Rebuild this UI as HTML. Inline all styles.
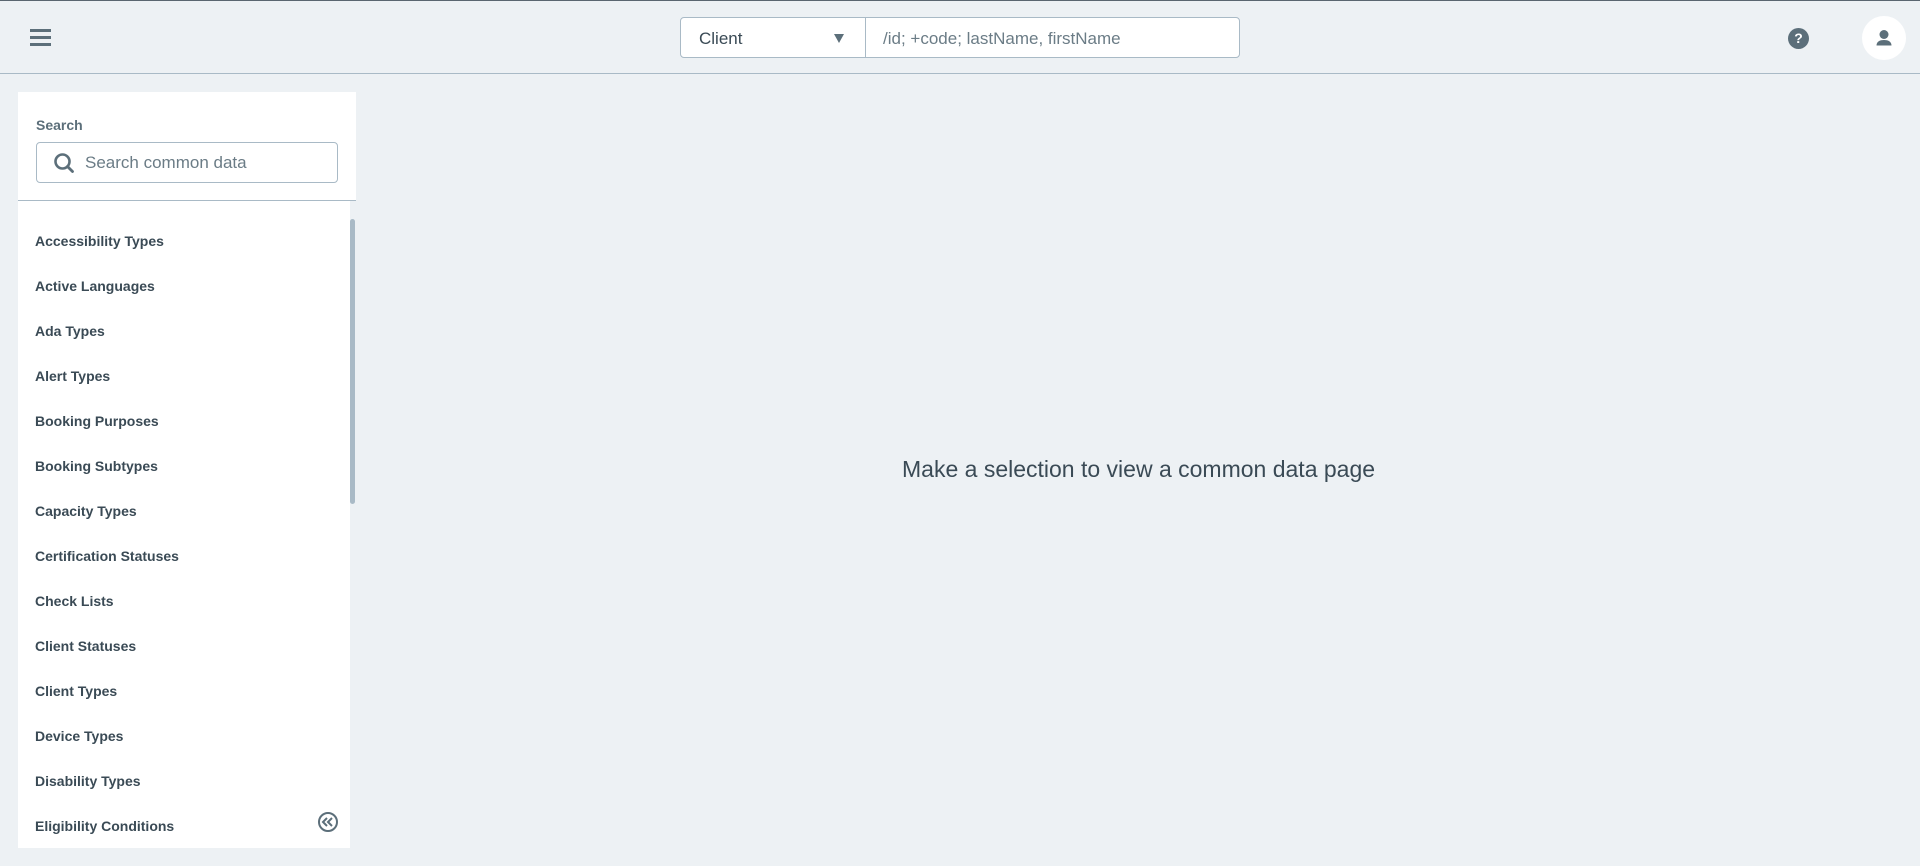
<!DOCTYPE html>
<html><head><meta charset="utf-8"><style>
*{box-sizing:border-box;margin:0;padding:0}
body{width:1920px;height:866px;background:#edf1f4;font-family:"Liberation Sans",sans-serif;position:relative;overflow:hidden;color:#3a4a55}
.top{position:absolute;left:0;top:0;width:1920px;height:74px;border-top:1px solid #5a6670;border-bottom:1px solid #a9bac6;background:#edf1f4}
.hb{position:absolute;left:30px;top:28px;width:21px}
.hb i{display:block;height:2.5px;background:#5c6f7a;margin-bottom:4.5px}
.sbox{position:absolute;left:680px;top:16px;width:560px;height:41px;background:#fff;border:1px solid #a9bac6;border-radius:4px}
.sel{position:absolute;left:0;top:0;width:185px;height:39px;border-right:1px solid #a9bac6;font-size:17px;color:#3a4a55;padding:11px 0 0 18px}
.tri{position:absolute;left:153px;top:16px;width:0;height:0;border-left:5px solid transparent;border-right:5px solid transparent;border-top:9px solid #5c6f7a}
.ph{position:absolute;left:202px;top:11px;font-size:17px;color:#6b7c86}
.help{position:absolute;left:1788px;top:27px;width:21px;height:21px;border-radius:50%;background:#5c6f7a;color:#fff;font-size:14px;font-weight:bold;text-align:center;line-height:21px}
.user{position:absolute;left:1862px;top:15px;width:44px;height:44px;border-radius:50%;background:#fff}
.panel{position:absolute;left:18px;top:92px;width:338px;height:756px;overflow:hidden}
.head{position:absolute;left:0;top:0;width:338px;height:109px;background:#fff}
.list{position:absolute;left:0;top:109px;width:332px;height:647px;background:#fff}
.lbl{position:absolute;left:18px;top:25px;font-size:14px;color:#5c6f7a;font-weight:bold}
.in{position:absolute;left:18px;top:50px;width:302px;height:41px;border:1px solid #a9bac6;border-radius:4px}
.in span{position:absolute;left:48px;top:10px;font-size:17px;color:#6b7c86}
.div{position:absolute;left:0;top:108px;width:338px;height:1px;background:#a9bac6}
.sc{position:absolute;left:332px;top:127px;width:5px;height:285px;background:#a9bac6;border-radius:3px}
.items{position:absolute;left:17px;top:140px}
.items div{height:45px;font-size:14px;font-weight:bold;color:#3a4a55;line-height:18px}
.msg{position:absolute;left:902px;top:456px;font-size:23px;color:#3a4a55}
</style></head><body>
<div class="top">
<div class="hb"><i></i><i></i><i></i></div>
<div class="sbox"><div class="sel">Client<div class="tri"></div></div><div class="ph">/id; +code; lastName, firstName</div></div>
<div class="help">?</div>
<div class="user"><svg width="44" height="44" viewBox="0 0 44 44"><circle cx="22" cy="18.5" r="4.5" fill="#5c6f7a"/><path d="M14.5 29.5c0-4 3.5-5.5 7.5-5.5s7.5 1.5 7.5 5.5z" fill="#5c6f7a"/></svg></div>
</div>
<div class="panel">
<div class="head"></div><div class="list"></div>
<div class="lbl">Search</div>
<div class="in"><svg style="position:absolute;left:16px;top:9px" width="22" height="22" viewBox="0 0 22 22"><circle cx="9.5" cy="9.5" r="7" fill="none" stroke="#5c6f7a" stroke-width="2.6"/><path d="M14.5 14.5L19.5 19.5" stroke="#5c6f7a" stroke-width="2.8" stroke-linecap="round"/></svg><span>Search common data</span></div>
<div class="div"></div>
<div class="sc"></div>
<div class="items">
<div>Accessibility Types</div><div>Active Languages</div><div>Ada Types</div><div>Alert Types</div><div>Booking Purposes</div><div>Booking Subtypes</div><div>Capacity Types</div><div>Certification Statuses</div><div>Check Lists</div><div>Client Statuses</div><div>Client Types</div><div>Device Types</div><div>Disability Types</div><div>Eligibility Conditions</div>
</div>
<svg style="position:absolute;left:299px;top:719px" width="22" height="22" viewBox="0 0 22 22"><circle cx="11" cy="11" r="9" fill="none" stroke="#5c6f7a" stroke-width="2"/><path d="M10 7l-4 4 4 4M15 7l-4 4 4 4" fill="none" stroke="#5c6f7a" stroke-width="2"/></svg>
</div>
<div class="msg">Make a selection to view a common data page</div>
</body></html>
